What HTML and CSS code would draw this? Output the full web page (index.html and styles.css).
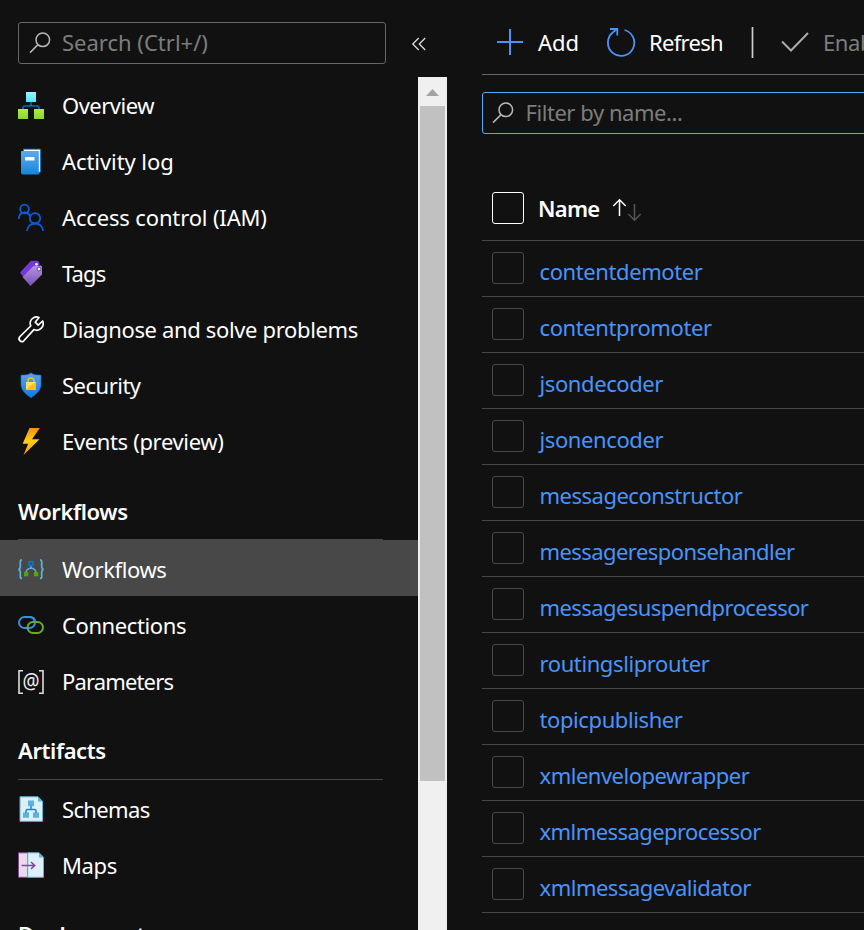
FILE: index.html
```html
<!DOCTYPE html>
<html lang="en">
<head>
<meta charset="utf-8">
<title>Workflows</title>
<link rel="stylesheet" href="styles.css">
</head>
<body>
<div class="app">
  <aside class="sidebar">
    <div class="sidebar-top">
      <div class="field search">
        <svg class="lens" viewBox="0 0 22 22"><circle cx="13.800" cy="7.800" r="6.800"/><path d="M9 12.600 1 20.600"/></svg>
        <span class="t-search">Search (Ctrl+/)</span>
      </div>
      <svg class="collapse" viewBox="0 0 14 14"><path d="M6.700 1 .8 7l5.900 6M13.200 1 7.300 7l5.900 6"/></svg>
    </div>
    <div class="sidebar-body">
      <nav class="menu">
        <a class="item"><svg class="icon" viewBox="0 0 26 26"><defs><linearGradient id="cy" x2="0" y2="1"><stop stop-color="#9bf0ff"/><stop offset="1" stop-color="#50e6ff"/></linearGradient><linearGradient id="gr" x2="0" y2="1"><stop stop-color="#b4ec36"/><stop offset="1" stop-color="#86d633"/></linearGradient></defs><path d="M13 9v4M5 18v-2q0-2 2-2h4q2 0 2-2 0 2 2 2h4q2 0 2 2v2" fill="none" stroke="#0f67b5" stroke-width="1.500"/><path fill="url(#cy)" d="M8 0h10v10H8z"/><path fill="url(#gr)" d="M0 17h10v10H0zM16 17h10v10H16z"/></svg><span class="t-overview">Overview</span></a>
        <a class="item"><svg class="icon" viewBox="0 0 26 26"><defs><linearGradient id="bk" x2="0" y2="1"><stop stop-color="#5ea9ed"/><stop offset="1" stop-color="#1686dc"/></linearGradient></defs><path fill="#1475c5" d="M5 .7h17q1 0 1 1v22l-2 2H5z"/><path fill="#fff" d="M6 1.700h16v22H6z"/><path fill="url(#bk)" d="M4 3h16.800v23.500H5q-2 0-2-2V4q0-1 1-1z"/><path fill="#fff" d="M7 9h9.500v3.500H7z"/></svg><span class="t-activity">Activity log</span></a>
        <a class="item"><svg class="icon" viewBox="0 0 26 26"><g fill="none" stroke="#0b5cd7" stroke-width="1.800"><circle cx="6.500" cy="5" r="4.300"/><path d="M.8 15c0-8 9-8 11.200-3M9 27c.5-10 15.500-10 16.200 0"/><circle cx="17" cy="14.300" r="5.200"/></g></svg><span class="t-access">Access control (IAM)</span></a>
        <a class="item"><svg class="icon" viewBox="0 0 26 26"><defs><linearGradient id="tg" x2="0" y2="1"><stop stop-color="#b795e6"/><stop offset="1" stop-color="#7650b2"/></linearGradient></defs><path fill="#7537d8" d="M13 .8h6.500l2 4L5 16.500l-3-4z"/><path fill="url(#tg)" d="m4.500 17 11-11 7.500-.5 1 1v8L12.500 26z"/><path fill="#7537d8" d="M17 1h3q1.500.5 1.500 3L20 6h-3z"/><circle cx="18.500" cy="4.200" r="1.300" fill="#fff"/><circle cx="21" cy="9" r="2" fill="#fff" stroke="#6234b0"/></svg><span class="t-tags">Tags</span></a>
        <a class="item"><svg class="icon" viewBox="0 0 26 26"><path d="M2 20.500 12.700 10C10.500 4 16-.5 21 1.500l-3.800 4.700 3 3 4.500-4.200C27 11 21 16 15.900 13.600L5.800 24.800c-2.800 2.500-6.500-1.500-3.800-4.300z" fill="none" stroke="#fff" stroke-width="1.700" stroke-linejoin="round"/></svg><span class="t-diagnose">Diagnose and solve problems</span></a>
        <a class="item"><svg class="icon" viewBox="0 0 26 26"><defs><linearGradient id="sh" x2="0" y2="1"><stop stop-color="#5ea3ea"/><stop offset="1" stop-color="#0f7bdb"/></linearGradient></defs><path fill="url(#sh)" stroke="#1673c9" stroke-width=".6" d="M13 .8C15 3 19 3 23 3.200V12c0 7-5.500 10.500-10 13.800C8.500 22.500 3 19 3 12V3.200C7 3 11 3 13 .8z"/><path d="M10 10.500V9a3 3 0 0 1 6 0v1.500" fill="none" stroke="#ffbf0f" stroke-width="1.400"/><path fill="#ffc40c" d="M8 10h10v8H8z"/><path fill="#ffe05c" d="M8 10h10L8 17z"/></svg><span class="t-security">Security</span></a>
        <a class="item"><svg class="icon" viewBox="0 0 26 26"><defs><linearGradient id="bo" x2="0" y2="1"><stop stop-color="#f78d1e"/><stop offset=".5" stop-color="#ffd014"/><stop offset="1" stop-color="#fa901d"/></linearGradient></defs><path fill="url(#bo)" d="M11.500 0h10.300L14 11.200h7.500L5.500 27l4.700-11.200H4.700z"/></svg><span class="t-events">Events (preview)</span></a>
        <h2 class="group first"><span>Workflows</span></h2>
        <a class="item selected"><svg class="icon" viewBox="0 0 26 26"><g fill="none" stroke="#59b4d9" stroke-width="1.700"><path d="M4 3.800Q2.300 3.800 2.300 6v4.500q0 2.500-1.800 2.900 1.800.4 1.800 2.900v4.200q0 2 1.700 2M22 3.800q1.700 0 1.700 2.200v4.500q0 2.500 1.800 2.900-1.800.4-1.800 2.900v4.200q0 2-1.700 2"/><path d="M13 9v3.500M8 17q0-4 5-5 5 1 5 5" stroke-width="1.300"/></g><path fill="none" stroke="#0078d4" stroke-width="1.600" d="M11 5.800h4v3.400h-4z"/><path fill="#57a300" d="M6 16h4.300v4.300H6zM16 16h4.300v4.300H16z"/></svg><span>Workflows</span></a>
        <a class="item"><svg class="icon" viewBox="0 0 26 26"><g fill="none" stroke-width="2"><rect x="1" y="5" width="16" height="11" rx="5.500" stroke="#3b8ce2"/><rect x="9.500" y="10" width="15.500" height="11" rx="5.500" stroke="#67ad23"/><path d="M12 5q5 0 5 5.500" stroke="#3b8ce2"/></g></svg><span>Connections</span></a>
        <a class="item"><svg class="icon" viewBox="0 0 26 26"><path d="M5 2.800H1v22.400h4M21 2.800h4v22.400h-4" fill="none" stroke="#ddd" stroke-width="1.600"/><text class="at" x="4.500" y="20.500" textLength="17" lengthAdjust="spacingAndGlyphs">@</text></svg><span class="t-parameters">Parameters</span></a>
        <h2 class="group"><span>Artifacts</span></h2>
        <a class="item"><svg class="icon" viewBox="0 0 26 26"><path fill="#deeff8" stroke="#59b4d9" d="M2 .8h18l4.500 4.500v20H2z"/><path fill="#59b4d9" d="M20 .8V5.500h4.500zM10 4.500h6v5.700h-6zM5 16.500h6v5.200H5zM15 16.500h6v5.200h-6z"/><path d="M13 10v3.500M8 17v-2q0-1.500 1.500-1.500h7q1.500 0 1.500 1.500v2" fill="none" stroke="#1b86d6" stroke-width="1.500"/></svg><span class="t-schemas">Schemas</span></a>
        <a class="item"><svg class="icon" viewBox="0 0 26 26"><path fill="#e8dcec" stroke="#804998" d="M.5.8h9v24.500h-9z"/><path fill="#deeff8" stroke="#59b4d9" d="M9.700.8H21l4.500 4.500v20H9.700z"/><path fill="#59b4d9" d="M21 .8v4.700h4.500z"/><path d="M3.500 13.500h13M13 10l3.700 3.500L13 17" fill="none" stroke="#804998" stroke-width="1.600"/></svg><span>Maps</span></a>
        <h2 class="group"><span>Deployment</span></h2>
      </nav>
      <div class="scrollbar"><svg class="arrow" viewBox="0 0 13 7"><path d="M0 7 6.500 0 13 7z"/></svg><div class="thumb"></div></div>
    </div>
  </aside>
  <main class="content">
    <div class="toolbar">
      <svg class="plus" viewBox="0 0 26 26"><path d="M13 0v26M0 13h26"/></svg>
      <span class="t-add">Add</span>
      <svg class="refresh" viewBox="0 0 28 28"><path d="M17.600 2A13.200 13.200 0 1 1 6 4.300L10 1M3 1h7.300v6.500"/></svg>
      <span class="t-refresh">Refresh</span>
      <i class="divider"></i>
      <svg class="check" viewBox="0 0 28 20"><path d="m1 9.500 9 9L27 1"/></svg>
      <span class="t-enable">Enable</span>
    </div>
    <div class="field filter">
      <svg class="lens" viewBox="0 0 22 22"><circle cx="13.800" cy="7.800" r="6.800"/><path d="M9 12.600 1 20.600"/></svg>
      <span class="t-filter">Filter by name...</span>
    </div>
    <div class="head"><i class="box"></i><span class="t-name">Name</span><svg class="sort" viewBox="0 0 28 22"><path stroke="#fff" d="M6.500 17V1M.3 7l6.200-6.200L12.700 7"/><path stroke="#555" d="M21.500 5v16M15.300 15l6.200 6.200 6.200-6.200"/></svg></div>
    <div class="row"><i class="box"></i><a>contentdemoter</a></div>
    <div class="row"><i class="box"></i><a>contentpromoter</a></div>
    <div class="row"><i class="box"></i><a>jsondecoder</a></div>
    <div class="row"><i class="box"></i><a>jsonencoder</a></div>
    <div class="row"><i class="box"></i><a class="tight">messageconstructor</a></div>
    <div class="row"><i class="box"></i><a class="tighter">messageresponsehandler</a></div>
    <div class="row"><i class="box"></i><a class="tighter">messagesuspendprocessor</a></div>
    <div class="row"><i class="box"></i><a>routingsliprouter</a></div>
    <div class="row"><i class="box"></i><a>topicpublisher</a></div>
    <div class="row"><i class="box"></i><a class="tight">xmlenvelopewrapper</a></div>
    <div class="row"><i class="box"></i><a class="tighter">xmlmessageprocessor</a></div>
    <div class="row"><i class="box"></i><a class="tight">xmlmessagevalidator</a></div>
  </main>
</div>
</body>
</html>
```
FILE: styles.css
```css
* { box-sizing: border-box; }
body { margin: 0; background: #111; color: #fff; font: 22px/30px "Noto Sans", "Open Sans", sans-serif; letter-spacing: -0.4px; overflow: hidden; }
.app { display: flex; height: 930px; overflow: hidden; }
svg { display: block; flex: none; overflow: visible; }
span, a { white-space: nowrap; }
.sidebar { width: 447px; flex: none; display: flex; flex-direction: column; }
.sidebar-top { height: 77px; padding: 22px 0 0 18px; display: flex; flex: none; }
.field { height: 42px; border: 1px solid #666; border-radius: 3px; display: flex; align-items: center; padding-left: 10px; gap: 11px; color: #7d7d7d; }
.field span { margin-top: -2px; }
.search { width: 368px; }
.lens { width: 22px; height: 22px; fill: none; stroke: #b8b8b8; stroke-width: 1.5; }
.collapse { width: 14px; height: 14px; margin: 15px 0 0 26px; fill: none; stroke: #ddd; stroke-width: 1.3; }
.sidebar-body { display: flex; flex: 1; min-height: 0; }
.menu { width: 418px; margin-top: -1px; overflow: hidden; }
.item { height: 56px; display: flex; align-items: center; gap: 18px; padding: 2px 0 0 18px; }
.item.selected { background: #484848; }
.icon { width: 26px; height: 26px; }
.at { font: 22px "Noto Sans", sans-serif; letter-spacing: 0; fill: #eee; }
.group { margin: 0 35px 0 18px; height: 72px; padding-top: 27px; border-bottom: 1px solid #484848; font-size: 22px; line-height: 30px; font-weight: 600; }
.group.first { padding-top: 28px; }
.scrollbar { width: 29px; background: #f0f0f0; padding: 12px 2px 0; }
.arrow { width: 13px; height: 7px; margin: 0 auto 10px; fill: #a3a3a3; }
.thumb { height: 675px; background: #c1c1c1; }

/* label tracking */
.t-search { letter-spacing: 0; }
.t-filter { letter-spacing: -0.45px; }
.t-overview, .t-security { letter-spacing: -0.5px; }
.t-activity { letter-spacing: -0.07px; }
.t-access { letter-spacing: -0.15px; }
.t-tags { letter-spacing: -0.9px; }
.t-diagnose, .t-events { letter-spacing: -0.35px; }
.t-parameters { letter-spacing: -0.85px; }
.t-schemas { letter-spacing: -0.65px; }
.tight { letter-spacing: -0.5px; }
.tighter { letter-spacing: -0.57px; }

.content { flex: 1; min-width: 0; padding-left: 35px; }
.toolbar { height: 75px; border-bottom: 1px solid #666; margin-bottom: 17px; padding: 10px 0 0 15px; display: flex; align-items: center; }
.toolbar > * { flex: none; }
.plus { width: 26px; height: 26px; margin-right: 15px; fill: none; stroke: #4894fe; stroke-width: 2; }
.t-add { width: 69px; letter-spacing: 0; }
.refresh { width: 28px; height: 28px; margin-right: 14px; fill: none; stroke: #4894fe; stroke-width: 1.8; }
.t-refresh { width: 102px; letter-spacing: -0.7px; }
.divider { width: 3px; height: 31px; background: #ccc; border: solid #555; border-width: 0 1px; margin-right: 27px; }
.check { width: 28px; height: 20px; margin-right: 14px; fill: none; stroke: #aaa; stroke-width: 2; }
.t-enable { color: #7d7d7d; }
.filter { width: 400px; border-color: #4eacf8; padding-left: 9px; gap: 11.5px; }
.head { height: 107px; padding: 42px 0 0 10px; border-bottom: 1px solid #484848; display: flex; align-items: center; }
.head .box { border-color: #fff; }
.box { width: 32px; height: 32px; border: 1px solid #484848; border-radius: 3px; margin-right: 14px; flex: none; }
.t-name { font-weight: 600; width: 75px; letter-spacing: -0.7px; }
.sort { width: 28px; height: 22px; margin-top: 4px; fill: none; stroke-width: 1.5; }
.row { height: 56px; border-bottom: 1px solid #484848; padding: 11px 0 0 10px; display: flex; color: #4894fe; }
.row a { margin: 4px 0 0 1.500px; }
```
